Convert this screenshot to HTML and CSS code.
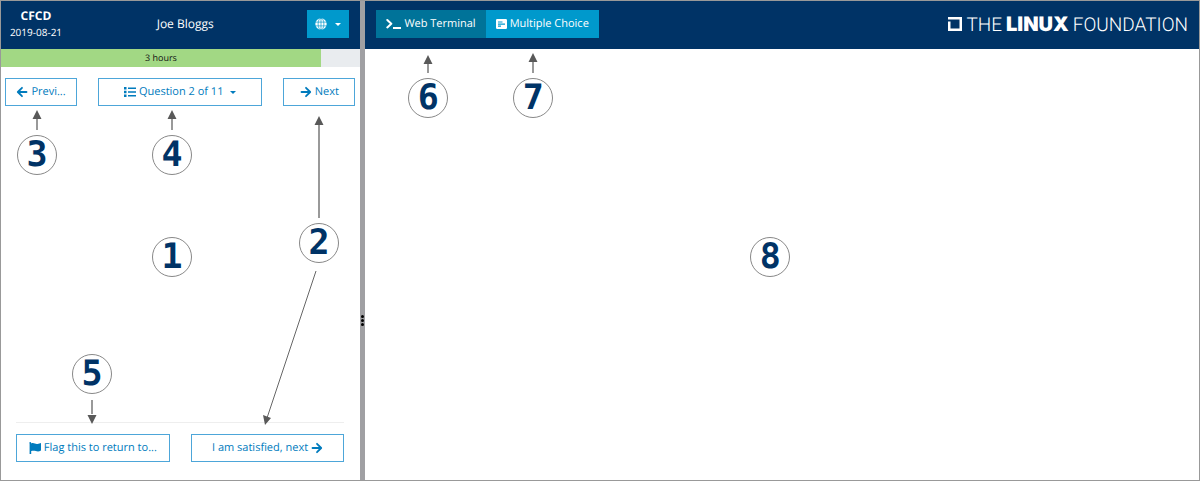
FILE: index.html
```html
<!DOCTYPE html>
<html lang="en">
<head>
<meta charset="utf-8">
<title>CFCD exam</title>
<link rel="stylesheet" href="styles.css">
</head>
<body>
<svg class="sprite" aria-hidden="true">
  <symbol id="arrow-right" viewBox="0 0 12 12"><path d="M1.500 6h8.500M6 1.800l4.200 4.200L6 10.200" fill="none" stroke="currentColor" stroke-width="1.800" stroke-linecap="round" stroke-linejoin="round"/></symbol>
  <symbol id="arrow-left" viewBox="0 0 12 12"><path d="M10.500 6H2M6 1.800L1.800 6 6 10.200" fill="none" stroke="currentColor" stroke-width="1.800" stroke-linecap="round" stroke-linejoin="round"/></symbol>
  <symbol id="list" viewBox="0 0 12 12"><path d="M0 1h2.500v2.500H0zM0 4.800h2.500v2.500H0zM0 8.600h2.500v2.500H0zM4 1.500h8v1.500H4zM4 5.300h8v1.500H4zM4 9.100h8v1.500H4z" fill="currentColor"/></symbol>
  <symbol id="flag" viewBox="0 0 12 12"><path d="M.3.800a1 1 0 0 1 1.900 0v.7c2.500-1.200 4 .8 6.300.4C9.800 1.700 11 1 12 .9v7.600c-4 2.300-5.600-.8-9.800.6V12H.6V1.800z" fill="currentColor"/></symbol>
  <symbol id="globe" viewBox="0 0 12 12"><circle cx="6" cy="6" r="5.700" fill="currentColor"/><path d="M6 0v12M0 4.100h12M0 7.900h12" stroke="#0099cc" stroke-width=".7"/><ellipse cx="6" cy="6" rx="2.900" ry="5.900" fill="none" stroke="#0099cc" stroke-width=".7"/></symbol>
  <symbol id="terminal" viewBox="0 0 15 12"><path d="M1.300 2l4 3.700-4 3.700" fill="none" stroke="currentColor" stroke-width="2" stroke-linecap="round" stroke-linejoin="round"/><path d="M7 9h8v2H7z" fill="currentColor"/></symbol>
  <symbol id="form" viewBox="0 0 11 11"><path fill-rule="evenodd" d="M1.200.5h8.600Q11 .5 11 1.700v7.600q0 1.200-1.200 1.200H1.200Q0 10.500 0 9.300V1.700Q0 .5 1.200.5zM2 2.900v1.200h4.500V2.900zM2 5v1.200h7V5zM2 7.100v1.200h3V7.100z" fill="currentColor"/></symbol>
</svg>
<div class="app">
  <section class="side">
    <header class="bar">
      <div class="exam"><strong>CFCD</strong><span>2019-08-21</span></div>
      <div class="user">Joe Bloggs</div>
      <button class="btn solid lang" aria-label="Language"><svg class="icon"><use href="#globe"/></svg><i class="caret"></i></button>
    </header>
    <div class="progress"><div class="remaining">3 hours</div></div>
    <nav class="steps">
      <button class="btn outline"><svg class="icon"><use href="#arrow-left"/></svg>Previ...</button>
      <button class="btn outline wide"><svg class="icon"><use href="#list"/></svg>Question 2 of 11<i class="caret"></i></button>
      <button class="btn outline"><svg class="icon"><use href="#arrow-right"/></svg>Next</button>
    </nav>
    <footer class="actions">
      <button class="btn outline"><svg class="icon"><use href="#flag"/></svg>Flag this to return to...</button>
      <button class="btn outline">I am satisfied, next<svg class="icon"><use href="#arrow-right"/></svg></button>
    </footer>
    <svg class="arrows" aria-hidden="true">
      <path class="line" d="M36 129v-15M171 129v-15M318 217v-95M91 399v14"/>
      <path class="slant" d="M315 270L266 417"/>
      <path class="head" d="M36 109l4.500 9H31.500zM171 109l4.500 9H166.500zM318 115l4.500 9H313.500zM91 423l4.500-9H86.500zM264 424l-2-10 8 3z"/>
    </svg>
    <span class="pin p1">1</span><span class="pin p2">2</span><span class="pin p3">3</span><span class="pin p4">4</span><span class="pin p5">5</span>
  </section>
  <div class="splitter"><i></i><i></i><i></i></div>
  <main class="work">
    <header class="bar">
      <div class="tabs">
        <button class="btn solid active"><svg class="icon term"><use href="#terminal"/></svg>Web Terminal</button>
        <button class="btn solid"><svg class="icon form"><use href="#form"/></svg>Multiple Choice</button>
      </div>
      <div class="logo"><svg viewBox="0 0 14 14"><path d="M0 2.500V0h14v14H0V4.500h2.500v7h9v-9z" fill="#fff"/></svg><span>THE</span><b>LINUX</b><span>FOUNDATION</span></div>
    </header>
    <svg class="arrows" aria-hidden="true">
      <path class="line" d="M63 72V60M168 72V58"/>
      <path class="head" d="M63 54l4.500 9H58.500zM168 52l4.500 9H163.500z"/>
    </svg>
    <span class="pin p6">6</span><span class="pin p7">7</span><span class="pin p8">8</span>
  </main>
</div>
</body>
</html>
```
FILE: styles.css
```css
* { box-sizing: border-box; }
body { margin: 0; font-family: "Open Sans", sans-serif; font-size: 12px; line-height: 18px; text-rendering: geometricPrecision; }
.sprite { position: absolute; width: 0; height: 0; }
.app { display: flex; min-height: 100vh; border: 1px solid #999; background: #fff; }
.side { position: relative; flex: 0 0 30%; display: flex; flex-direction: column; }
.work { position: relative; flex: 1; }
.bar { display: flex; align-items: center; justify-content: space-between; height: 48px; padding: 0 11px 2px; background: #003366; color: #fff; }
.side .bar { padding-left: 8px; }
.exam { display: flex; flex-direction: column; align-items: center; width: 54px; font-size: 10px; line-height: 16px; white-space: nowrap; }
.exam strong { font-size: 12px; }
.btn { display: flex; align-items: center; justify-content: center; gap: 3px; height: 28px; padding: 0 9px; border: 1px solid transparent; font: inherit; font-size: 11px; text-rendering: inherit; white-space: nowrap; }
.solid { background: #0099cc; color: #fff; }
.active { background: #007399; }
.outline { background: #fff; border-color: #4da6d9; color: #007bbd; }
.lang { gap: 8px; width: 42px; padding: 0; }
.icon { flex: none; width: 12px; height: 12px; }
.icon.term { width: 15px; }
.icon.form { width: 11px; }
.caret { border: 3px solid transparent; border-top-color: currentColor; border-bottom: 0; }
.wide .caret { margin-left: 4px; }
.progress { height: 18px; background: #e9ecef; }
.remaining { width: 89%; height: 100%; background: #a2d884; color: #111; font-size: 9px; text-align: center; }
.steps { display: grid; grid-template-columns: minmax(0, 72fr) minmax(0, 164fr) minmax(0, 72fr); gap: 21px; padding: 11px 5px 0 4px; }
.actions { display: grid; grid-template-columns: minmax(0, 1fr) minmax(0, 1fr); gap: 21px; margin: auto 16px 18px 15px; padding-top: 11px; border-top: 1px solid #eee; }
.splitter { flex: 0 0 5px; display: flex; flex-direction: column; align-items: center; justify-content: center; gap: 1px; padding-top: 160px; background: #a0a0a3; }
.splitter i { width: 3px; height: 3px; border-radius: 50%; background: #000; }
.tabs { display: flex; }
.logo { display: flex; align-items: baseline; gap: 4px; font-family: Roboto, sans-serif; font-size: 19px; font-weight: 300; }
.logo svg { width: 14px; height: 14px; }
.logo b { font-family: Inter, sans-serif; font-size: 20px; font-weight: 900; }
.arrows { position: absolute; inset: 0; width: 100%; height: 100%; pointer-events: none; }
.line { stroke: #999; stroke-width: 2; }
.slant { stroke: #666; stroke-width: 1; }
.head { fill: #595959; }
.pin { position: absolute; width: 40px; height: 40px; border: 1px solid #888; border-radius: 50%; background: #fff; color: #003366; font: bold 35px/38px "DejaVu Sans Mono", monospace; text-align: center; }
.p1 { left: 151px; top: 236px; }
.p2 { left: 298px; top: 222px; }
.p3 { left: 16px; top: 134px; }
.p4 { left: 151px; top: 134px; }
.p5 { left: 71px; top: 353px; }
.p6 { left: 43px; top: 77px; }
.p7 { left: 148px; top: 77px; }
.p8 { left: 385px; top: 236px; }
```
